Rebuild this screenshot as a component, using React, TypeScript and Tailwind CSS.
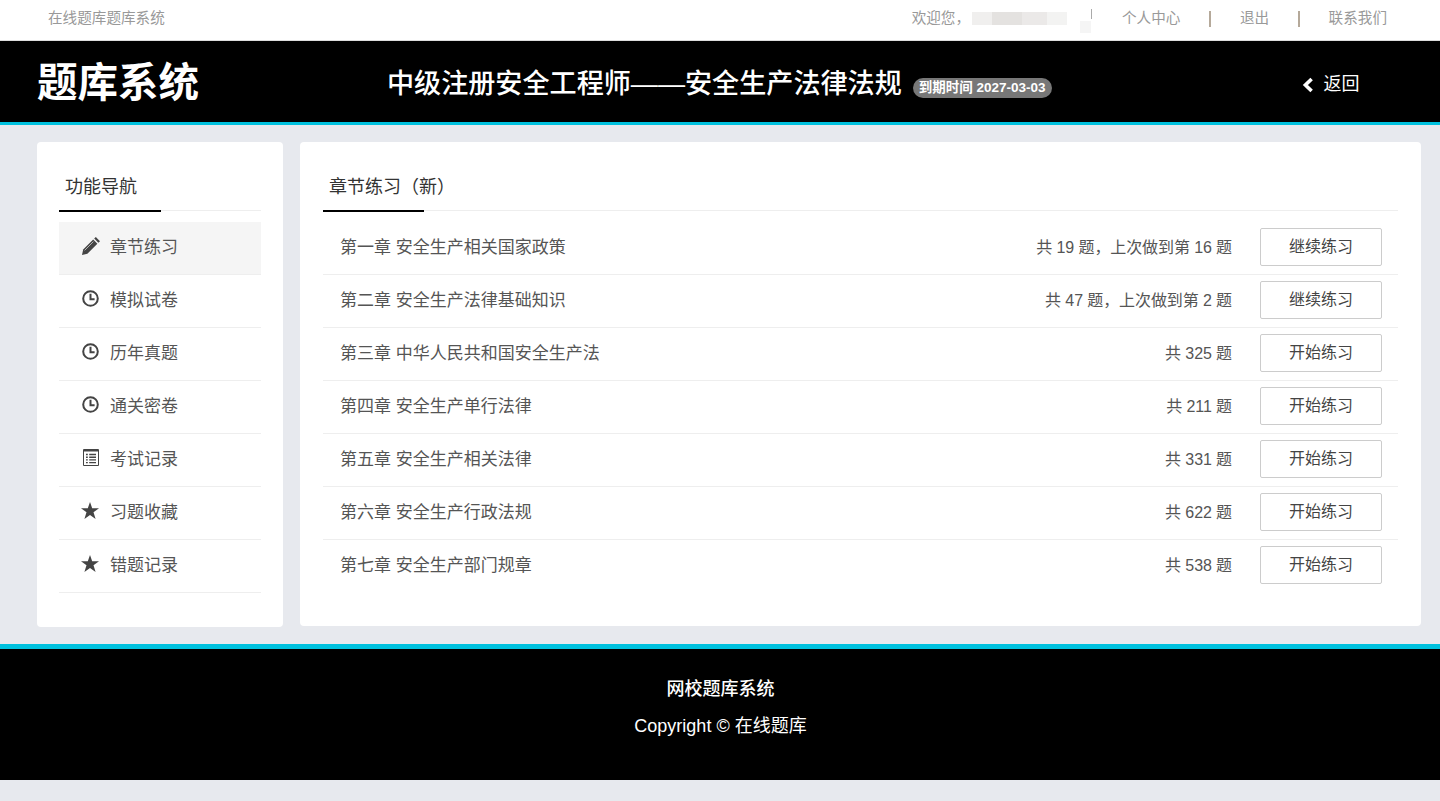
import React from 'react'

const font = "font-['Liberation_Sans','Noto_Sans_CJK_SC',sans-serif]"

function ClockIcon() {
  return (
    <svg viewBox="0 0 17 17" className="ml-[1px] h-[17px] w-[17px]" fill="none" stroke="#444" strokeWidth="2">
      <circle cx="8.5" cy="8.5" r="7.3" />
      <path d="M8.5 3.8V9.2H12.6" />
    </svg>
  )
}

function ListIcon() {
  return (
    <svg viewBox="0 0 16 17" className="ml-[2px] h-[17px] w-[16px]" fill="none" stroke="#444">
      <path d="M.5 .5H15.5V16.5H.5Z" />
      <path d="M1 1.5H15" strokeWidth="2" />
      <path d="M3 5.5H4.8M6.2 5.5H13M3 8.2H4.8M6.2 8.2H13M3 10.9H4.8M6.2 10.9H13M3 13.6H4.8M6.2 13.6H13" strokeWidth="1.4" />
    </svg>
  )
}

function PencilIcon() {
  return (
    <svg viewBox="0 0 18 18" className="ml-[1px] h-[18px] w-[18px]" fill="#444">
      <path d="M1.2 12.6 11.2 2.6 15.4 6.8 5.4 16.8 0 18Z" />
      <path d="M12.2 1.6 13.8 0 18 4.2 16.4 5.8Z" />
      <path d="M2.6 13.4 11.4 4.6" stroke="#fff" strokeWidth=".6" />
    </svg>
  )
}

function StarIcon() {
  return (
    <svg viewBox="0 0 18 17" className="h-[17px] w-[18px]" fill="#444">
      <path d="M9 0 11.2 6.3H18L12.5 10.3 14.6 17 9 12.9 3.4 17 5.5 10.3 0 6.3H6.8Z" />
    </svg>
  )
}

const navItems = [
  { label: '章节练习', icon: <PencilIcon />, active: true },
  { label: '模拟试卷', icon: <ClockIcon /> },
  { label: '历年真题', icon: <ClockIcon /> },
  { label: '通关密卷', icon: <ClockIcon /> },
  { label: '考试记录', icon: <ListIcon /> },
  { label: '习题收藏', icon: <StarIcon /> },
  { label: '错题记录', icon: <StarIcon /> },
]

const chapters = [
  { name: '第一章 安全生产相关国家政策', count: '共 19 题，上次做到第 16 题', action: '继续练习' },
  { name: '第二章 安全生产法律基础知识', count: '共 47 题，上次做到第 2 题', action: '继续练习' },
  { name: '第三章 中华人民共和国安全生产法', count: '共 325 题', action: '开始练习' },
  { name: '第四章 安全生产单行法律', count: '共 211 题', action: '开始练习' },
  { name: '第五章 安全生产相关法律', count: '共 331 题', action: '开始练习' },
  { name: '第六章 安全生产行政法规', count: '共 622 题', action: '开始练习' },
  { name: '第七章 安全生产部门规章', count: '共 538 题', action: '开始练习' },
]

function PanelTitle({ title, className }: { title: string; className: string }) {
  return (
    <div className="h-[69px] border-b border-[#eee]">
      <div className={`flex h-[70px] items-end whitespace-nowrap border-b-2 border-black pb-[10px] text-[18px] leading-[26px] text-[#333] ${className}`}>
        {title}
      </div>
    </div>
  )
}

export default function App() {
  return (
    <div className={`min-h-[801px] bg-[#e7e9ee] ${font}`}>
      {/* Top bar */}
      <div className="flex h-[41px] items-center justify-between border-b border-[#ddd] bg-white pr-[53px] pb-[3px] pl-[48px] text-[14.6px] text-[#999]">
        <span>在线题库题库系统</span>
        <div className="flex items-center">
          <span>欢迎您，</span>
          <div className="ml-[2px] flex h-[13px] w-[95px] bg-[#e6e4e2]">
            <div className="h-full w-[20px] bg-[#f0efee]" />
            <div className="h-full w-[30px] bg-[#e4e2e0]" />
            <div className="h-full w-[25px] bg-[#ebe9e8]" />
            <div className="h-full w-[20px] bg-[#f3f3f2]" />
          </div>
          <div className="mt-[16px] ml-[13px] h-[12px] w-[11px] bg-[#f5f5f5]" />
          <span className="mr-[30px] -mt-[10px] h-[10px] w-px bg-[#aaa]" />
          <span>个人中心</span>
          <span className="mx-[29px] h-[16px] w-[1.5px] bg-[#b5a99a]" />
          <span>退出</span>
          <span className="mx-[29px] h-[16px] w-[1.5px] bg-[#b5a99a]" />
          <span>联系我们</span>
        </div>
      </div>

      {/* Header */}
      <div className="flex h-[84px] items-center border-b-[3px] border-[#00c1de] bg-black pl-[37px] text-white">
        <span className="mt-[2px] w-[350px] text-[40.5px] leading-[80px] font-bold whitespace-nowrap">题库系统</span>
        <span className="mt-[5px] text-[27.1px] leading-[78px] font-medium">中级注册安全工程师——安全生产法律法规</span>
        <span className="mt-[13px] ml-[11px] rounded-[10px] bg-[#777] px-[6px] py-[3px] text-[13.5px] leading-[14px] font-bold">
          到期时间 2027-03-03
        </span>
        <span className="mt-[6px] ml-[250px] flex items-center text-[18px]">
          <svg viewBox="0 0 12 16" className="mr-[10px] h-[16px] w-[12px]" fill="none" stroke="#fff" strokeWidth="3.6">
            <path d="M9.6 2 3.4 8 9.6 14" />
          </svg>
          返回
        </span>
      </div>

      {/* Content */}
      <div className="flex items-start gap-[17px] pt-[17px] pl-[37px]">
        <div className="h-[485px] w-[246px] rounded-[4px] bg-white px-[22px]">
          <PanelTitle title="功能导航" className="w-[102px] pl-[6px]" />
          <div className="mt-[11px]">
            {navItems.map(item => (
              <div
                key={item.label}
                className={`flex h-[53px] items-center border-b border-[#eee] pl-[22px] text-[17px] text-[#555] ${item.active ? 'bg-[#f5f5f5]' : ''}`}
              >
                <span className="mb-[5px] flex w-[29px] items-center">{item.icon}</span>
                {item.label}
              </div>
            ))}
          </div>
        </div>

        <div className="h-[484px] w-[1121px] rounded-[4px] bg-white px-[23px]">
          <PanelTitle title="章节练习（新）" className="w-[101px] pl-[6px]" />
          <div className="mt-[11px]">
            {chapters.map(ch => (
              <div key={ch.name} className="flex h-[53px] items-center border-b border-[#eee] pr-[16px] pl-[17px] text-[17px] text-[#555] last:border-transparent">
                <span className="flex-1">{ch.name}</span>
                <span className="text-[16px] tracking-[-0.1px]">{ch.count}</span>
                <button className="mb-[2px] ml-[28px] h-[38px] w-[122px] rounded-[2px] border border-[#ccc] bg-white text-[16px] text-[#444]">
                  {ch.action}
                </button>
              </div>
            ))}
          </div>
        </div>
      </div>

      {/* Footer */}
      <div className="mt-[17px] flex h-[136px] flex-col items-center border-t-[5px] border-[#00c1de] bg-black pt-[22px] pl-[1px] text-[18px] leading-[37px] text-white">
        <span className="font-medium">网校题库系统</span>
        <span>Copyright © 在线题库</span>
      </div>
    </div>
  )
}
